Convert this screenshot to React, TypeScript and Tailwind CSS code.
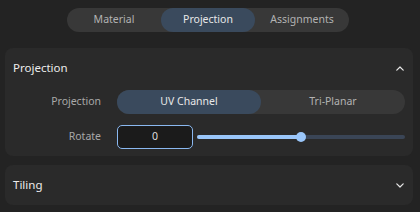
import React from "react";

function Chevron({ up }: { up?: boolean }) {
  return (
    <svg width="8" height="5" viewBox="0 0 8 5" className="block">
      <path
        d={up ? "M0.8 4.2 L4 1 L7.2 4.2" : "M0.8 0.8 L4 4 L7.2 0.8"}
        stroke="#e6e6e6"
        strokeWidth="1.2"
        fill="none"
        strokeLinecap="round"
        strokeLinejoin="round"
      />
    </svg>
  );
}

export default function App() {
  const tabs = ["Material", "Projection", "Assignments"];
  return (
    <div className="w-[420px] h-[212px] overflow-hidden bg-[#232323] font-['Noto_Sans',sans-serif] pt-2 pl-[5px] pr-[7px] flex flex-col">
      <div className="ml-[62px] w-[282px] h-6 rounded-full bg-[#383838] grid grid-cols-3">
        {tabs.map((t) => (
          <div
            key={t}
            className={
              t === "Projection"
                ? "flex items-center justify-center rounded-full bg-[#3a4a5d] text-[10.5px] text-[#e8e8e8]"
                : "flex items-center justify-center rounded-full text-[10.5px] text-[#b2b2b2]"
            }
          >
            {t}
          </div>
        ))}
      </div>

      <div className="mt-4 rounded-lg bg-[#2a2a2a] flex flex-col">
        <div className="h-10 flex items-center justify-between pl-2 pr-[9px]">
          <span className="text-[11.5px] text-[#ececec]">Projection</span>
          <Chevron up />
        </div>
        <div className="flex flex-col gap-[11px] pt-[2px] pb-[7px] px-2">
          <div className="flex items-center h-6">
            <div className="w-[88px] text-right text-[10.5px] text-[#a8a8a8]">Projection</div>
            <div className="ml-4 flex-1 h-6 rounded-full bg-[#383838] grid grid-cols-2">
              <div className="flex items-center justify-center rounded-full bg-[#3a4a5d] text-[10.5px] text-[#e8e8e8]">
                UV Channel
              </div>
              <div className="flex items-center justify-center rounded-full text-[10.5px] text-[#b2b2b2]">
                Tri-Planar
              </div>
            </div>
          </div>
          <div className="flex items-center h-6">
            <div className="w-[88px] text-right text-[10.5px] text-[#a8a8a8]">Rotate</div>
            <div className="ml-4 w-[76px] h-6 rounded-[5px] border border-[#8ab8f0] bg-[#1b1b1b] flex items-center justify-center text-[10.5px] text-[#dedede]">
              0
            </div>
            <div className="ml-1 flex-1 relative h-[10px] flex items-center">
              <div className="w-full h-1 rounded-full bg-[#3a4556]" />
              <div className="absolute left-0 top-[3px] w-1/2 h-1 rounded-full bg-[#9ac6fa]" />
              <div className="absolute left-1/2 top-0 -translate-x-1/2 w-2.5 h-2.5 rounded-full bg-[#9ac6fa]" />
            </div>
          </div>
        </div>
      </div>

      <div className="mt-[9px] h-10 rounded-lg bg-[#2a2a2a] flex items-center justify-between pl-2 pr-[9px]">
        <span className="text-[11.5px] text-[#ececec]">Tiling</span>
        <Chevron />
      </div>
    </div>
  );
}
